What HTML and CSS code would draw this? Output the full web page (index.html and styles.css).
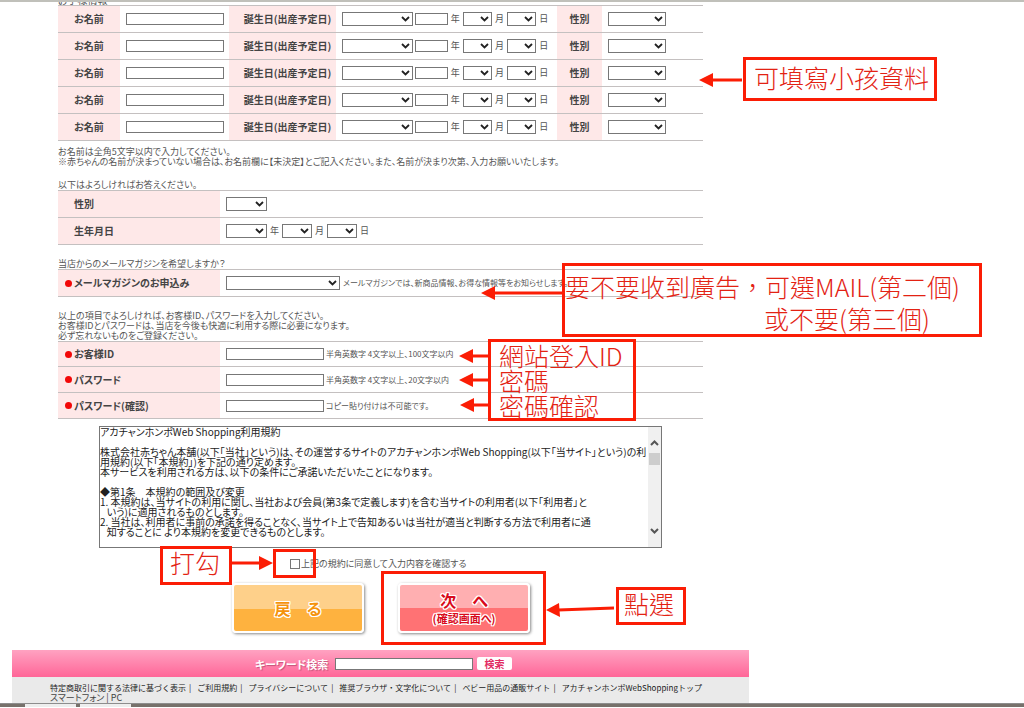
FILE: index.html
```
<!DOCTYPE html>
<html lang="ja">
<head>
<meta charset="utf-8">
<title>アカチャンホンポ 会員登録</title>
<link rel="stylesheet" href="styles.css">
</head>
<body>
<div class="topbar"></div>
<main class="page">
<form class="form">
  <h2 class="cut-title">お子様情報</h2>
  <table class="kids">
    <colgroup><col class="c-name"><col class="c-namefield"><col class="c-birth"><col class="c-birthfield"><col class="c-sex"><col class="c-sexfield"></colgroup>
    <tbody>
    <tr>
      <th><label for="n1">お名前</label></th><td><input id="n1" class="text wide" type="text"></td>
      <th><label for="e1">誕生日(出産予定日)</label></th>
      <td><div class="fields"><select id="e1" class="sel era"></select><input class="text year" type="text" aria-label="年"><span class="unit">年</span><select class="sel small" aria-label="月"></select><span class="unit">月</span><select class="sel small" aria-label="日"></select><span class="unit">日</span></div></td>
      <th><label for="s1">性別</label></th><td><select id="s1" class="sel sex"></select></td>
    </tr>
    <tr>
      <th><label for="n2">お名前</label></th><td><input id="n2" class="text wide" type="text"></td>
      <th><label for="e2">誕生日(出産予定日)</label></th>
      <td><div class="fields"><select id="e2" class="sel era"></select><input class="text year" type="text" aria-label="年"><span class="unit">年</span><select class="sel small" aria-label="月"></select><span class="unit">月</span><select class="sel small" aria-label="日"></select><span class="unit">日</span></div></td>
      <th><label for="s2">性別</label></th><td><select id="s2" class="sel sex"></select></td>
    </tr>
    <tr>
      <th><label for="n3">お名前</label></th><td><input id="n3" class="text wide" type="text"></td>
      <th><label for="e3">誕生日(出産予定日)</label></th>
      <td><div class="fields"><select id="e3" class="sel era"></select><input class="text year" type="text" aria-label="年"><span class="unit">年</span><select class="sel small" aria-label="月"></select><span class="unit">月</span><select class="sel small" aria-label="日"></select><span class="unit">日</span></div></td>
      <th><label for="s3">性別</label></th><td><select id="s3" class="sel sex"></select></td>
    </tr>
    <tr>
      <th><label for="n4">お名前</label></th><td><input id="n4" class="text wide" type="text"></td>
      <th><label for="e4">誕生日(出産予定日)</label></th>
      <td><div class="fields"><select id="e4" class="sel era"></select><input class="text year" type="text" aria-label="年"><span class="unit">年</span><select class="sel small" aria-label="月"></select><span class="unit">月</span><select class="sel small" aria-label="日"></select><span class="unit">日</span></div></td>
      <th><label for="s4">性別</label></th><td><select id="s4" class="sel sex"></select></td>
    </tr>
    <tr>
      <th><label for="n5">お名前</label></th><td><input id="n5" class="text wide" type="text"></td>
      <th><label for="e5">誕生日(出産予定日)</label></th>
      <td><div class="fields"><select id="e5" class="sel era"></select><input class="text year" type="text" aria-label="年"><span class="unit">年</span><select class="sel small" aria-label="月"></select><span class="unit">月</span><select class="sel small" aria-label="日"></select><span class="unit">日</span></div></td>
      <th><label for="s5">性別</label></th><td><select id="s5" class="sel sex"></select></td>
    </tr>
    </tbody>
  </table>
  <p class="note after-kids">お名前は全角5文字以内で入力してください。<br>※赤ちゃんの名前が決まっていない場合は、お名前欄に【未決定】とご記入ください。また、名前が決まり次第、入力お願いいたします。</p>

  <p class="note gap-above">以下はよろしければお答えください。</p>
  <div class="rows">
    <div class="row"><div class="head"><label for="sex">性別</label></div><div class="fields"><select id="sex" class="sel mid"></select></div></div>
    <div class="row"><div class="head"><label for="by">生年月日</label></div><div class="fields"><select id="by" class="sel mid"></select><span class="unit">年</span><select class="sel small" aria-label="月"></select><span class="unit">月</span><select class="sel small" aria-label="日"></select><span class="unit">日</span></div></div>
  </div>

  <p class="note gap-mail">当店からのメールマガジンを希望しますか？</p>
  <div class="rows">
    <div class="row"><div class="head required"><label for="mag">メールマガジンのお申込み</label></div><div class="fields"><select id="mag" class="sel mag"></select><span class="tiny">メールマガジンでは、新商品情報、お得な情報等をお知らせします。</span></div></div>
  </div>

  <p class="note gap-account">以上の項目でよろしければ、お客様ID、パスワードを入力してください。<br>お客様IDとパスワードは、当店を今後も快適に利用する際に必要になります。<br>必ず忘れないものをご登録ください。</p>
  <div class="rows account">
    <div class="row"><div class="head required"><label for="uid">お客様ID</label></div><div class="fields"><input id="uid" class="text wide" type="text"><span class="hint">半角英数字 4文字以上、100文字以内</span></div></div>
    <div class="row"><div class="head required"><label for="pw">パスワード</label></div><div class="fields"><input id="pw" class="text wide" type="password"><span class="hint">半角英数字 4文字以上、20文字以内</span></div></div>
    <div class="row"><div class="head required"><label for="pw2">パスワード(確認)</label></div><div class="fields"><input id="pw2" class="text wide" type="password"><span class="hint">コピー貼り付けは不可能です。</span></div></div>
  </div>

  <div class="terms">
    <textarea class="terms-text" aria-label="利用規約" readonly>
アカチャンホンポWeb Shopping利用規約

株式会社赤ちゃん本舗(以下「当社」という)は、その運営するサイトのアカチャンホンポWeb Shopping(以下「当サイト」という)の利
用規約(以下「本規約」)を下記の通り定めます。
本サービスを利用される方は、以下の条件にご承諾いただいたことになります。

◆第1条　本規約の範囲及び変更
1. 本規約は、当サイトの利用に関し、当社および会員(第3条で定義します)を含む当サイトの利用者(以下「利用者」と
   いう)に適用されるものとします。
2. 当社は、利用者に事前の承諾を得ることなく、当サイト上で告知あるいは当社が適当と判断する方法で利用者に通
   知することに より本規約を変更できるものとします。</textarea>
    <div class="scroll">
      <svg width="9" height="6" viewBox="0 0 9 6"><path d="M1 5 4.500 1.500 8 5"/></svg>
      <span class="thumb"></span>
      <svg width="9" height="6" viewBox="0 0 9 6"><path d="M1 1 4.500 4.500 8 1"/></svg>
    </div>
  </div>

  <div class="agree"><input id="agree" type="checkbox"><label for="agree">上記の規約に同意して入力内容を確認する</label></div>
  <div class="actions">
    <button class="btn back" type="button">戻　る</button>
    <button class="btn next" type="button">次　へ<small>(確認画面へ)</small></button>
  </div>
</form>
<footer>
  <form class="search">
    <label for="kw">キーワード検索</label><input id="kw" class="text" type="text"><button type="button">検索</button>
  </form>
  <nav class="links">
    <div class="main-links"><a href="#">特定商取引に関する法律に基づく表示</a><a href="#">ご利用規約</a><a href="#">プライバシーについて</a><a href="#">推奨ブラウザ・文字化について</a><a href="#">ベビー用品の通販サイト</a><a href="#">アカチャンホンポWebShoppingトップ</a></div>
    <div class="sub-links"><a href="#">スマートフォン</a> | <a href="#">PC</a></div>
  </nav>
</footer>
</main>
<div class="taskbar"><span></span><span></span></div>

<div class="marks" lang="zh-Hant">
  <div class="mark m-kids">可填寫小孩資料</div>
  <div class="mark m-mail"><p>要不要收到廣告，可選MAIL(第二個)</p><p class="indent">或不要(第三個)</p></div>
  <div class="mark m-login"><p>網站登入ID</p><p>密碼</p><p>密碼確認</p></div>
  <div class="mark m-tick">打勾</div>
  <div class="mark m-box"></div>
  <div class="mark m-next"></div>
  <div class="mark m-click">點選</div>
  <svg class="arrows" width="1024" height="708" viewBox="0 0 1024 708">
    <g stroke="#fb1d05" stroke-width="3"><path d="M710 80H742M492 293H564M470 356H489M470 380H489M470 405H489M231 563H262M614 608 558 610"/></g>
    <path fill="#fb1d05" d="M699 80l14-7v14zM481 293l14-7v14zM459 356l14-7v14zM459 380l14-7v14zM460 405l14-7v14zM273 563l-14-7v14zM546 610l13-7 1 14z"/>
  </svg>
</div>
</body>
</html>
```
FILE: styles.css
```
* { box-sizing: border-box; }
body {
  position: relative;
  margin: 0;
  background: #fff;
  color: #555;
  font: 10px/10px "Noto Sans CJK JP", sans-serif;
  font-feature-settings: "palt";
  overflow-x: hidden;
}
p, h2 { margin: 0; font-size: inherit; font-weight: inherit; }
input, select, button, textarea { font: inherit; font-feature-settings: inherit; margin: 0; }
a { color: inherit; text-decoration: none; }

.topbar { height: 2px; background: #c0c0ba; }
.page { max-width: 737px; margin-left: 12px; }
.form { padding: 0 46px; }
.cut-title { display: flex; align-items: flex-end; height: 3px; overflow: hidden; white-space: nowrap; }

/* Fields */
.text { height: 12px; padding: 0 2px; border: 1px solid #777; background: #fff; border-radius: 0; }
.wide { width: 98px; }
.year { width: 33px; }
.sel {
  height: 14px;
  padding: 0;
  border: 1px solid #777;
  border-radius: 0;
  appearance: none;
  background: #fff url("data:image/svg+xml,%3Csvg xmlns='http://www.w3.org/2000/svg' width='9' height='6'%3E%3Cpath d='M1 1l3.500 3.500L8 1' fill='none' stroke='%23222' stroke-width='1.800'/%3E%3C/svg%3E") no-repeat right 2px center;
}
.era { width: 72px; }
.small { width: 30px; }
.mid { width: 41px; }
.sex { width: 58px; }
.mag { width: 114px; }
.fields { display: flex; align-items: center; white-space: nowrap; }
.fields .year { margin-left: 2px; }
.unit { width: 15px; text-align: center; font-size: 9px; }

/* Children table */
.kids { width: 100%; table-layout: fixed; border-collapse: collapse; border-top: 1px solid #c4c0c0; }
.kids tr { height: 27px; border-bottom: 1px solid #c4c0c0; }
.kids th { padding: 0; background: #fee8e8; color: #444; font-weight: 700; text-align: center; }
.kids th:nth-child(3) { padding-left: 10px; }
.kids td { padding: 0 6px; }
.kids .text, .kids .sel { vertical-align: middle; }
.c-name { width: 62px; }
.c-namefield { width: 109px; }
.c-birth { width: 107px; }
.c-birthfield { width: 221px; }
.c-sex { width: 45px; }

/* Label and field rows */
.note { font-size: 9px; white-space: nowrap; }
.after-kids { padding-top: 6px; }
.gap-above { padding-top: 13px; }
.gap-mail { padding-top: 14px; }
.gap-account { padding-top: 14px; }
.rows { border-top: 1px solid #c4c0c0; }
.row { display: flex; height: 27px; border-bottom: 1px solid #c4c0c0; }
.account .row { height: 26px; }
.account .row:first-child { height: 25px; }
.head { display: flex; align-items: center; width: 162px; padding-left: 16px; background: #fee8e8; color: #444; font-weight: 700; }
.row .fields { flex: 1; padding-left: 6px; }
.required { padding-left: 7px; }
.required::before { content: ""; width: 7px; height: 7px; margin-right: 2px; border-radius: 50%; background: #f20808; }
.tiny { padding-left: 3px; font-size: 8px; }
.hint { padding-left: 2px; font-size: 8px; }

/* Terms */
.terms { display: flex; height: 122px; margin: 7px 41px 0; border: 1px solid #777; }
.terms-text { flex: 1; padding: 0; border: 0; outline: 0; resize: none; overflow: hidden; white-space: pre; color: #222; font-size: 10px; line-height: 10px; }
.scroll { display: flex; flex-direction: column; align-items: center; width: 13px; padding: 13px 0; background: #f0f0f0; }
.scroll svg { fill: none; stroke: #555; stroke-width: 2; }
.thumb { width: 11px; height: 12px; margin: 7px 0 auto; background: #cdcdcd; }

.agree { display: flex; align-items: center; height: 20px; margin-top: 6px; padding-left: 232px; font-size: 9px; }
.agree input { width: 10px; height: 10px; appearance: none; border: 1px solid #777; margin-right: 1px; }

.actions { display: flex; gap: 34px; padding: 9px 0 17px 174px; }
.btn {
  display: flex; flex-direction: column; align-items: center; justify-content: center; gap: 5px;
  width: 132px; height: 50px; padding: 0;
  border: 2px solid #fff; border-radius: 4px;
  box-shadow: 1px 1px 3px #888;
  font-size: 16px; line-height: 16px; font-weight: 700;
  text-shadow: 1px 0 #fff, -1px 0 #fff, 0 1px #fff, 0 -1px #fff, 1px 1px #fff, -1px -1px #fff, 1px -1px #fff, -1px 1px #fff;
}
.back { color: #f5930b; background: linear-gradient(#fed08a 52%, #feb23f 52%); }
.next { color: #d80b1c; background: linear-gradient(#ffafb1 50%, #ff7274 50%); }
.btn small { font-size: 11px; line-height: 11px; }

/* Footer */
.search { display: flex; align-items: center; height: 27px; padding-left: 243px; background: linear-gradient(#ffa2c1, #ff6698); color: #fff; }
.search label { width: 80px; font-size: 11px; font-weight: 700; text-shadow: 1px 1px 1px #c4527a; }
.search .text { width: 138px; }
.search button { width: 35px; height: 13px; margin-left: 4px; padding: 0; border: 0; border-radius: 2px; background: #fff; color: #e22a62; font-weight: 700; line-height: 12px; }
.links { height: 26px; padding: 6px 38px 0; background: #eaeaea; color: #222; white-space: nowrap; }
.main-links { display: flex; justify-content: space-between; width: 652px; font-size: 8px; font-feature-settings: normal; }
.main-links a + a::before { content: "|"; margin-right: 6px; }
.sub-links { color: #444; font-size: 9px; line-height: 9px; }
.taskbar { display: flex; gap: 4px; height: 4px; padding-left: 25px; border-top: 1px solid #8d8d8d; background: #77716b; }
.taskbar span { width: 51px; background: #eee; }

/* Red annotations over the form */
.marks { position: absolute; top: 0; left: 0; color: #e32213; font: 300 25px/25px "Noto Sans CJK TC", sans-serif; font-feature-settings: normal; white-space: nowrap; pointer-events: none; }
.arrows { position: absolute; top: 0; left: 0; }
.mark { position: absolute; border: 3px solid #fb1d05; }
.m-kids { left: 743px; top: 57px; width: 194px; height: 44px; padding: 5px 8px; }
.m-mail { left: 562px; top: 263px; width: 420px; height: 74px; padding: 8px 0; }
.m-mail p + p { margin-top: 7px; }
.m-mail .indent { padding-left: 199px; }
.m-login { left: 488px; top: 339px; width: 148px; height: 82px; padding: 1px 8px; }
.m-tick { left: 160px; top: 546px; width: 72px; height: 39px; padding: 1px 7px; }
.m-box { left: 273px; top: 549px; width: 43px; height: 29px; }
.m-next { left: 381px; top: 571px; width: 165px; height: 74px; }
.m-click { left: 616px; top: 587px; width: 70px; height: 38px; padding: 1px 5px; }
```
